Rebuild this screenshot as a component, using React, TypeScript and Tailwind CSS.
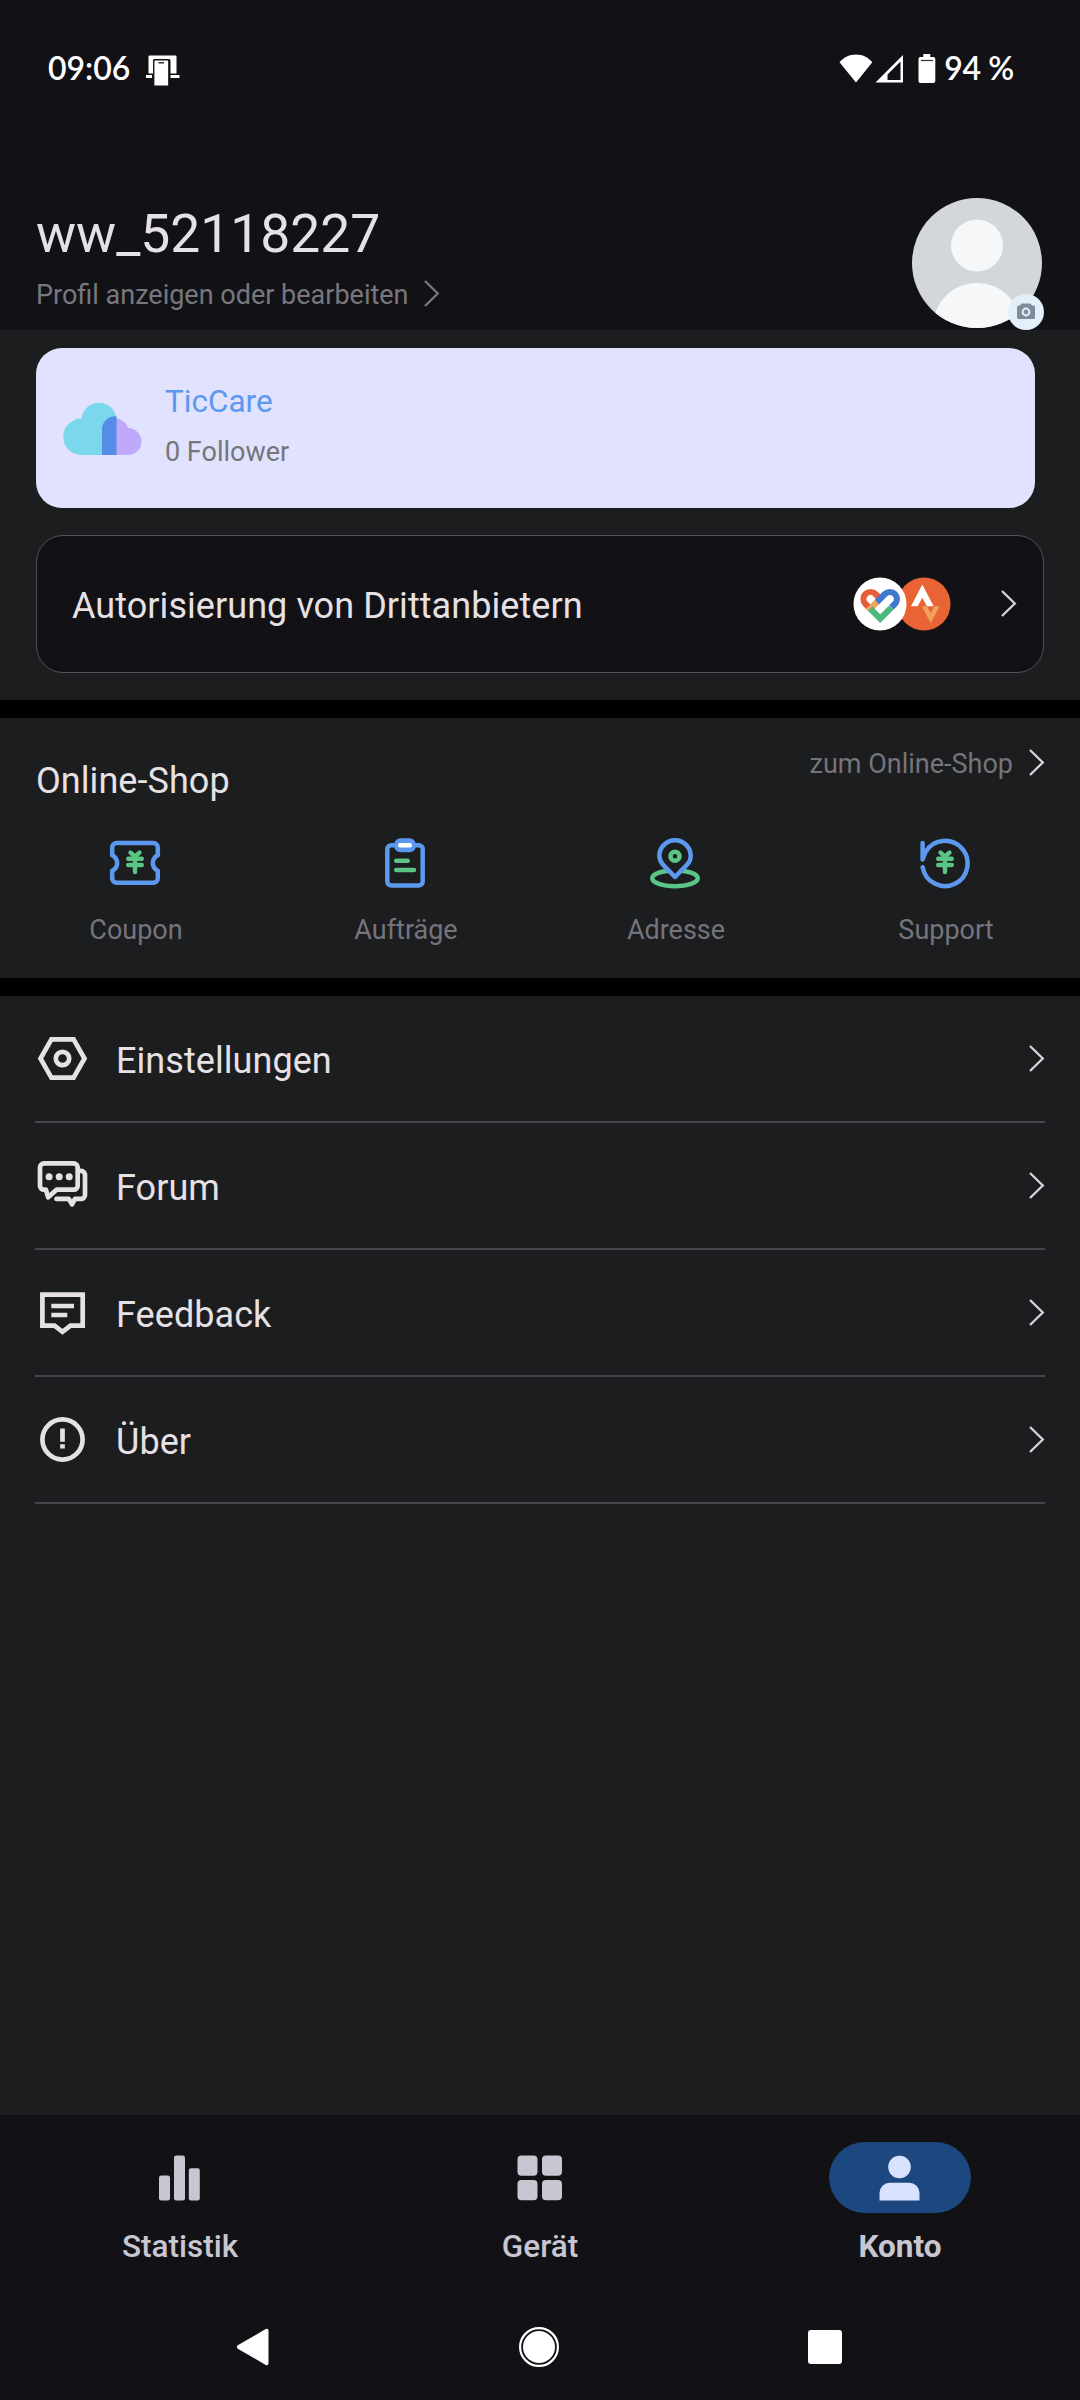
import type { ReactNode } from "react";

const BLUE = "#5c98ee";
const GREEN = "#5bc586";

// --- Shared glyphs ---
const Chevron = ({ className = "text-[#d6d5dc]" }: { className?: string }) => (
  <svg className={className} width="16" height="28" viewBox="0 0 16 28" fill="none" stroke="currentColor" strokeWidth="2.3">
    <path d="M1 1l12.800 12.500L1 26" />
  </svg>
);

const Yen = () => (
  <path d="M22.500 16.600L27 20.500l4.500-3.900M20.200 22.700h13.600M20.200 29h13.600M27 21v15" stroke={GREEN} strokeWidth="4.400" strokeLinecap="round" />
);

const ShopSvg = ({ children }: { children: ReactNode }) => (
  <svg width="54" height="54" viewBox="0 0 54 54" fill="none" strokeWidth="4.5">
    {children}
  </svg>
);

const RowSvg = ({ children }: { children: ReactNode }) => (
  <svg width="55" height="55" viewBox="0 0 55 55" fill="none" stroke="#e6e1e5" strokeWidth="4.7">
    {children}
  </svg>
);

// --- Data ---
const SHOP_ITEMS = [
  {
    label: "Coupon",
    icon: (
      <ShopSvg>
        <path
          d="M4.2 19V11.5a4.5 4.5 0 0 1 4.5-4.5h36.6a4.5 4.5 0 0 1 4.5 4.5V19c-6.6 4.2-6.6 11.8 0 16v7.3a4.5 4.5 0 0 1-4.5 4.5H8.7a4.5 4.5 0 0 1-4.5-4.5V35c6.6-4.2 6.6-11.8 0-16z"
          stroke={BLUE}
        />
        <Yen />
      </ShopSvg>
    ),
  },
  {
    label: "Aufträge",
    icon: (
      <ShopSvg>
        <rect x="9.3" y="9.2" width="35.4" height="40.3" rx="4" stroke={BLUE} />
        <rect x="16.3" y="2.3" width="21.4" height="14" rx="6" fill={BLUE} />
        <rect x="20" y="7" width="14" height="4.4" rx="2" fill="#fff" />
        <path d="M18.2 24.7h11.5M18.2 33.9H36" stroke={GREEN} strokeLinecap="round" />
      </ShopSvg>
    ),
  },
  {
    label: "Adresse",
    icon: (
      <ShopSvg>
        <ellipse cx="27" cy="42.3" rx="22.7" ry="7.9" stroke={GREEN} />
        <path d="M27 41L15.4 29.2A15.6 15.6 0 0 1 11.3 20a15.7 15.7 0 0 1 31.4 0c0 3.6-1.5 6.7-4.1 9.2z" fill="#1c1d1f" stroke={BLUE} strokeLinejoin="round" />
        <circle cx="27" cy="20.3" r="4.5" stroke={GREEN} />
      </ShopSvg>
    ),
  },
  {
    label: "Support",
    icon: (
      <ShopSvg>
        <path d="M4.6 7v16.5L7.5 16A22.6 22.6 0 1 1 4.7 31.3" stroke={BLUE} strokeLinecap="round" strokeLinejoin="round" />
        <Yen />
      </ShopSvg>
    ),
  },
];

const MENU_ITEMS = [
  {
    label: "Einstellungen",
    icon: (
      <RowSvg>
        <path d="M16.4 8.3h22.2l10.9 19.2-10.9 19.2H16.4L5.5 27.5z" />
        <circle cx="27.5" cy="27.5" r="6.7" />
      </RowSvg>
    ),
  },
  {
    label: "Forum",
    icon: (
      <RowSvg>
        <path d="M9 5.4h29.7a4 4 0 0 1 4 4v18.3a4 4 0 0 1-4 4H21.5l-8.3 7.6-2.3-7.6H9a4 4 0 0 1-4-4V9.4a4 4 0 0 1 4-4z" strokeLinejoin="round" />
        <path d="M44 12.9h2a4 4 0 0 1 4 4v20a4 4 0 0 1-4 4h-6l-3 5.5-3.2-5.5H21.5" strokeLinecap="round" strokeLinejoin="round" />
        <g fill="#e6e1e5" stroke="none">
          <circle cx="14.1" cy="18.8" r="3.5" />
          <circle cx="24.2" cy="18.8" r="3.5" />
          <circle cx="34.2" cy="18.8" r="3.5" />
        </g>
      </RowSvg>
    ),
  },
  {
    label: "Feedback",
    icon: (
      <RowSvg>
        <path d="M7.4 9.7h40.3v31H35.5l-8 6.2-8-6.2H7.4z" />
        <path d="M16.3 21H39M16.3 30h16" strokeWidth="4.3" />
      </RowSvg>
    ),
  },
  {
    label: "Über",
    icon: (
      <RowSvg>
        <circle cx="27.5" cy="27.5" r="20.1" />
        <path d="M27.5 16.5v13.3M27.5 32.2v4.2" />
      </RowSvg>
    ),
  },
];

const TABS = [
  {
    label: "Statistik",
    active: false,
    icon: (
      <svg width="54" height="54" viewBox="0 0 54 54" fill="#c8c6d0">
        <rect x="6" y="24.500" width="11" height="25" rx="2.200" />
        <rect x="21" y="4.500" width="11" height="45" rx="2.200" />
        <rect x="35.800" y="17.200" width="11" height="32.300" rx="2.200" />
      </svg>
    ),
  },
  {
    label: "Gerät",
    active: false,
    icon: (
      <svg width="54" height="54" viewBox="0 0 54 54" fill="#c8c6d0">
        <rect x="4.500" y="4.500" width="20" height="20.200" rx="4" />
        <rect x="29" y="4.500" width="20" height="20.200" rx="4" />
        <rect x="4.500" y="29.100" width="20" height="20.200" rx="4" />
        <rect x="29" y="29.100" width="20" height="20.200" rx="4" />
      </svg>
    ),
  },
  {
    label: "Konto",
    active: true,
    icon: (
      <svg width="54" height="54" viewBox="0 0 54 54" fill="#d7e2ff">
        <circle cx="26.5" cy="16" r="11.3" />
        <path d="M6.500 49.500V42A10.300 10.300 0 0 1 16.800 31.700h19.400A10.300 10.300 0 0 1 46.500 42v7.500z" />
      </svg>
    ),
  },
];

const StatusBar = () => (
  <div className="flex h-[86px] items-start pt-[48px] pr-[66px] pl-[48px] text-[32px] leading-[40px] font-semibold text-white font-[Lato,'Open_Sans',sans-serif]">
    <span>09:06</span>
    <svg className="mt-[7px] ml-[16px]" width="34" height="32" viewBox="0 0 34 32" fill="#fff">
      <path d="M2.500 18.500V1.500a1 1 0 0 1 1-1h26a1 1 0 0 1 1 1v17h-6V5.500a1.500 1.500 0 0 0-1.500-1.500H8.500A1.500 1.500 0 0 0 7 5.500v13z" />
      <path d="M0 20h6v3H0zM24.500 20h9v3h-9z" />
      <path d="M7.800 6a1 1 0 0 1 1-1h13a1 1 0 0 1 1 1V31h-15z" stroke="#121216" strokeWidth="1.200" />
      <path d="M12.500 7.800h5.500" stroke="#121216" strokeWidth="1.300" />
    </svg>
    <div className="ml-auto flex items-start">
      <svg className="mt-[6px]" width="97" height="30" viewBox="0 0 97 30" fill="#fff">
        <path d="M17 28.500L.5 8.300C4.800 3.200 10.500.5 17 .5s12 2.700 16.300 7.800z" />
        <path d="M36.500 28.500L64 1v27.500zM48.500 26H61.500V7.500L48.500 20.500z" fillRule="evenodd" />
        <path d="M84.300 0h7v3h3a2 2 0 0 1 2 2v22a2 2 0 0 1-2 2H81.500a2 2 0 0 1-2-2V5a2 2 0 0 1 2-2h2.800z" />
        <path d="M82 6.500h12" stroke="#333336" strokeWidth="1.200" />
      </svg>
      <span className="ml-[8px] tracking-[-0.3px]">94 %</span>
    </div>
  </div>
);

const ProfileHeader = () => (
  <header className="h-[330px] bg-[#121216]">
    <StatusBar />
    <div className="flex justify-between pr-[36px] pl-[36px]">
      <div className="pt-[117px]">
        <h1 className="text-[53.4px] leading-[62px] text-[#e6e1e5]">ww_52118227</h1>
        <div className="mt-[14px] flex items-center gap-[15px] text-[#78777d]">
          <span className="text-[27px] leading-[32px]">Profil anzeigen oder bearbeiten</span>
          <Chevron className="-mt-[2px] text-[#78777d]" />
        </div>
      </div>
      <div className="relative mt-[112px] h-[132px] w-[132px]">
        <svg width="130" height="130" viewBox="0 0 130 130">
          <clipPath id="avatar">
            <circle cx="65" cy="65" r="65" />
          </clipPath>
          <g clipPath="url(#avatar)">
            <rect width="130" height="130" fill="#d3d7da" />
            <circle cx="65" cy="47.500" r="26" fill="#f6f7f9" />
            <ellipse cx="65" cy="129" rx="44" ry="44" fill="#f6f7f9" />
          </g>
        </svg>
        <svg className="absolute right-0 bottom-0" width="36" height="36" viewBox="0 0 36 36">
          <circle cx="18" cy="18" r="18" fill="#e3effb" />
          <path d="M13.500 9.500h9l1.500 2h1.500A1.500 1.500 0 0 1 27 13v10.500a1.500 1.500 0 0 1-1.500 1.500h-15A1.500 1.500 0 0 1 9 23.500V13a1.500 1.500 0 0 1 1.500-1.500H12z" fill="#808b9a" />
          <circle cx="18" cy="18" r="3.400" fill="none" stroke="#e3effb" strokeWidth="2" />
        </svg>
      </div>
    </div>
  </header>
);

const CareCard = () => (
  <section className="mr-[45px] ml-[36px] flex h-[160px] rounded-[26px] bg-[#e0e2fe] pt-[36px] pl-[27px]">
    <svg className="mt-[16px]" width="79" height="56" viewBox="0 0 79 56">
      <path d="M18.500 55a17.800 17.800 0 0 1 0-36.500 17.600 17.600 0 0 1 35 0V55z" fill="#7bd7eb" />
      <path d="M39 55V29.500a13.300 13.300 0 0 1 26-1.500A13.300 13.300 0 0 1 65 55z" fill="#bea9fa" />
      <path d="M39 55V29.500A13.300 13.300 0 0 1 53.500 16.200V55z" fill="#558ce6" />
    </svg>
    <div className="ml-[23px]">
      <div className="text-[31.500px] leading-[36px] text-[#5c98ee]">TicCare</div>
      <div className="mt-[16px] text-[27px] leading-[32px] text-[#75767b]">0 Follower</div>
    </div>
  </section>
);

const ThirdPartyCard = () => (
  <section className="mx-[36px] mt-[27px] flex h-[138px] items-center rounded-[27px] border border-[#505156] bg-[#121216] pr-[26px] pl-[35px]">
    <span className="mt-[3px] text-[36px] leading-[42px] tracking-[0.060px] text-[#e6e1e5]">Autorisierung von Drittanbietern</span>
    <svg className="ml-auto" width="98" height="54" viewBox="0 0 98 54" fill="none">
      <circle cx="71" cy="27" r="26.500" fill="#e96335" />
      <path d="M58 29.300L69.300 7.600l11.300 21.700h-6.700l-4.600-8.600-4.600 8.600z" fill="#fff" />
      <path d="M68.800 29.300h5.200l3.700 7 3.600-7h5.200L77.700 46.300z" fill="#f0a15c" />
      <circle cx="27" cy="27" r="26.500" fill="#fff" />
      <g strokeWidth="6.200">
        <path d="M17.300 31.700L12.550 26.950a7 7 0 0 1 9.900-9.900L27.200 21.800" stroke="#e75d37" />
        <path d="M15.100 33.900L24.500 24.500" stroke="#efa466" />
        <path d="M24 25l7.950-7.950a7 7 0 0 1 9.900 9.900L38.500 30.300" stroke="#4079cc" />
        <path d="M17.300 31.800l9.900 9.900L38.500 30.400" stroke="#4cb97c" />
      </g>
    </svg>
    <div className="ml-[50px]">
      <Chevron />
    </div>
  </section>
);

const OnlineShop = () => (
  <section className="h-[260px]">
    <div className="flex justify-between pr-[35px] pl-[36px]">
      <h2 className="mt-[42px] text-[36px] leading-[42px] tracking-[0.060px] text-[#e6e1e5]">Online-Shop</h2>
      <div className="mt-[30px] flex h-[32px] items-center gap-[16px]">
        <span className="text-[27px] leading-[32px] text-[#75747d]">zum Online-Shop</span>
        <Chevron className="-mt-[2px] text-[#d6d5dc]" />
      </div>
    </div>
    <div className="mt-[34px] grid grid-cols-4">
      {SHOP_ITEMS.map(({ label, icon }) => (
        <div key={label} className="flex flex-col items-center gap-[24px]">
          {icon}
          <span className="pl-[2px] text-[27px] leading-[32px] text-[#75747d]">{label}</span>
        </div>
      ))}
    </div>
  </section>
);

const MenuList = () => (
  <nav className="flex-1 px-[35px]">
    {MENU_ITEMS.map(({ label, icon }) => (
      <div key={label} className="flex h-[127px] items-center border-b-2 border-[#48464c]">
        {icon}
        <span className="mt-[4px] ml-[26px] text-[36px] leading-[42px] tracking-[0.060px] text-[#e6e1e5]">{label}</span>
        <div className="ml-auto">
          <Chevron />
        </div>
      </div>
    ))}
  </nav>
);

const TabBar = () => (
  <footer className="h-[285px] bg-[#121216] pt-[27px]">
    <div className="grid grid-cols-3">
      {TABS.map(({ label, active, icon }) => (
        <div key={label} className="flex flex-col items-center gap-[16px]">
          <div className={`flex h-[71px] w-[142px] items-center justify-center rounded-full ${active ? "bg-[#1c477f]" : ""}`}>
            {icon}
          </div>
          <span className={`text-[31.500px] leading-[36px] text-[#c8c6d0] ${active ? "font-bold" : "font-medium"}`}>{label}</span>
        </div>
      ))}
    </div>
    <div className="mt-[61px] flex h-[42px] items-center justify-between pr-[238px] pl-[236px]">
      <svg width="34" height="38" viewBox="0 0 34 38" fill="#fff">
        <path d="M1.800 17.300L29.700 1.100Q32.500 0 32.500 3v32q0 3-2.800 1.900L1.800 20.700q-2-1.700 0-3.400z" />
      </svg>
      <svg width="42" height="42" viewBox="0 0 42 42" fill="none">
        <circle cx="21" cy="21" r="18.900" stroke="#fff" strokeWidth="2.200" />
        <circle cx="21" cy="21" r="16" fill="#fff" />
      </svg>
      <div className="h-[34px] w-[34px] rounded-[3px] bg-white" />
    </div>
  </footer>
);

export default function App() {
  return (
    <div className="flex h-[2400px] w-[1080px] flex-col overflow-hidden bg-[#1c1d1f] font-[Roboto,sans-serif]">
      <ProfileHeader />
      <main className="flex flex-1 flex-col pt-[18px]">
        <CareCard />
        <ThirdPartyCard />
        <div className="mt-[27px] h-[18px] bg-black" />
        <OnlineShop />
        <div className="h-[18px] bg-black" />
        <MenuList />
      </main>
      <TabBar />
    </div>
  );
}
